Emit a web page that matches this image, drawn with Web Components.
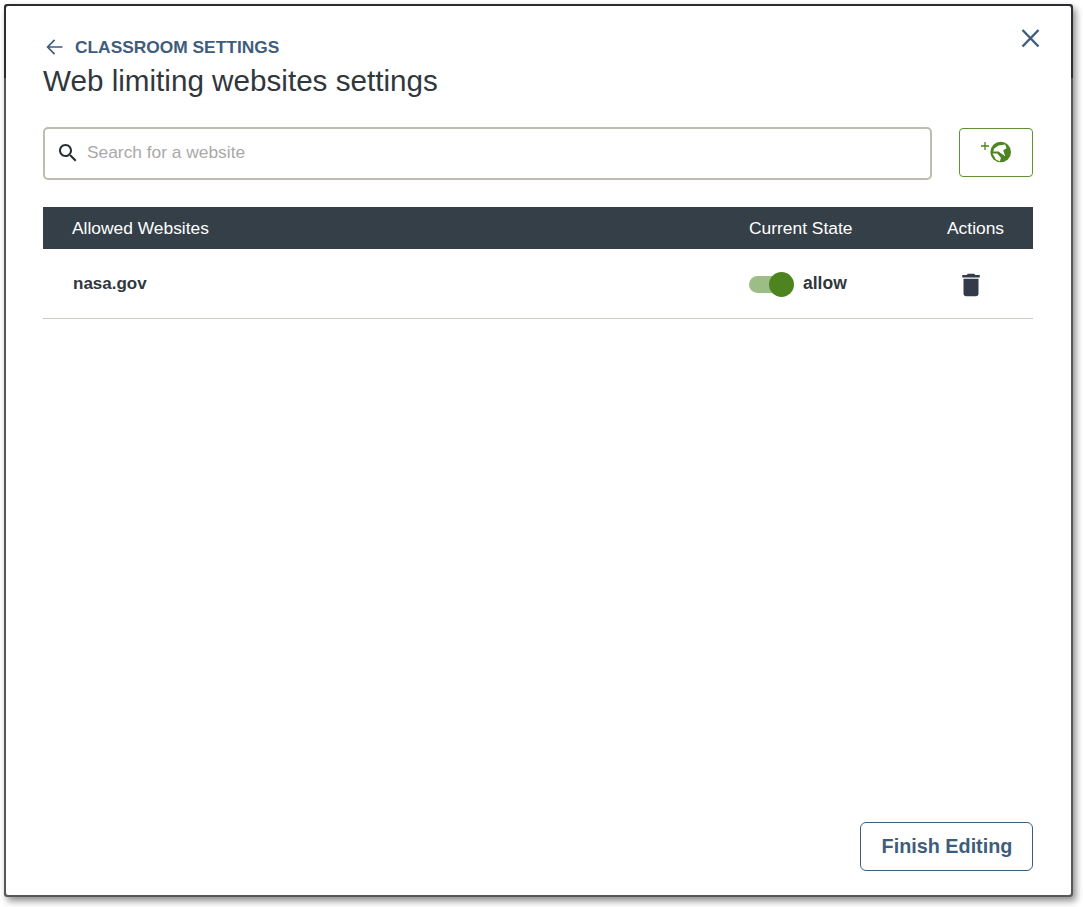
<!DOCTYPE html>
<html lang="en">
<head>
<meta charset="utf-8">
<title>Web limiting websites settings</title>
<style>
    html, body { margin: 0; height: 100%; background: #fff; }
    body { font-family: "Liberation Sans", Arial, sans-serif; }
</style>
</head>
<body>
<settings-modal>
    <modal-header slot="header" crumb="Classroom Settings" heading="Web limiting websites settings"></modal-header>
    <search-row placeholder="Search for a website"></search-row>
    <site-table>
        <site-row name="nasa.gov" state="allow"></site-row>
    </site-table>
    <finish-button slot="footer">Finish Editing</finish-button>
</settings-modal>

<script>
class SettingsModal extends HTMLElement {
    constructor() {
        super();
        this._shadowRoot = this.attachShadow({mode: 'open'});
    }

    connectedCallback() {
        this._shadowRoot.innerHTML = `
        <style>
            :host {
                display: block;
                box-sizing: border-box;
                width: 1069px;
                height: 893px;
                margin: 4px 0 0 4px;
                padding: 2px;
                border-radius: 3px;
                background: linear-gradient(#2b2d30 0 74px, #55585a 74px);
                box-shadow: 3px 4px 7px rgba(0, 0, 0, .45);
            }

            .panel {
                box-sizing: border-box;
                height: 100%;
                display: flex;
                flex-direction: column;
                padding: 28px 38px 24px 37px;
                border-radius: 2px;
                background: #fff;
            }

            .content { flex: 1; }

            footer {
                display: flex;
                justify-content: flex-end;
            }
        </style>
        <div class="panel">
            <slot name="header"></slot>
            <div class="content"><slot></slot></div>
            <footer><slot name="footer"></slot></footer>
        </div>
        `;
    }
}

class ModalHeader extends HTMLElement {
    constructor() {
        super();
        this._shadowRoot = this.attachShadow({mode: 'open'});
    }

    connectedCallback() {
        this._shadowRoot.innerHTML = `
        <style>
            :host {
                display: block;
                position: relative;
            }

            .crumb {
                display: flex;
                align-items: center;
                gap: 10px;
                height: 26px;
                padding-left: 2px;
                color: #3e5d7c;
                font-size: 17.350px;
                font-weight: 700;
                text-transform: uppercase;
            }

            .crumb svg { display: block; }

            h1 {
                margin: 3px 0 0;
                color: #30373d;
                font-size: 29.650px;
                font-weight: 400;
                line-height: 36px;
            }

            .close {
                position: absolute;
                top: -9px;
                right: -10px;
                display: block;
            }
        </style>
        <div class="crumb">
            <svg width="20" height="20" viewBox="0 0 20 20" fill="none" stroke="#3e5d7c" stroke-width="1.7">
                <path d="M17.5 10H3M9.6 2.8 2.6 10l7 7.2"/>
            </svg>
            <span>${this.getAttribute('crumb')}</span>
        </div>
        <h1>${this.getAttribute('heading')}</h1>
        <svg class="close" width="26" height="26" viewBox="0 0 26 26" fill="none" stroke="#3e5d7c" stroke-width="2.4">
            <path d="M5.500 5l16 16.500M21.500 5l-16 16.500"/>
        </svg>
        `;
    }
}

class SearchRow extends HTMLElement {
    constructor() {
        super();
        this._shadowRoot = this.attachShadow({mode: 'open'});
    }

    connectedCallback() {
        this._shadowRoot.innerHTML = `
        <style>
            :host {
                display: flex;
                align-items: flex-start;
                gap: 27px;
                margin-top: 28px;
            }

            .box {
                box-sizing: border-box;
                flex: 1;
                height: 53px;
                display: flex;
                align-items: center;
                gap: 7px;
                padding: 0 12px 2px 11px;
                border: 2px solid #bfbcae;
                border-radius: 5px;
            }

            .box svg { flex: none; display: block; }

            input {
                flex: 1;
                min-width: 0;
                padding: 0;
                border: 0;
                outline: 0;
                background: none;
                font: 17.350px "Liberation Sans", Arial, sans-serif;
                color: #30373d;
            }

            input::placeholder {
                color: #a9a9a9;
                opacity: 1;
            }

            button {
                box-sizing: border-box;
                flex: none;
                width: 74px;
                height: 49px;
                margin-top: 1px;
                padding: 0;
                display: flex;
                align-items: center;
                justify-content: center;
                border: 1.500px solid #5f9137;
                border-radius: 4px;
                background: #fff;
            }

            button svg { display: block; }
        </style>
        <div class="box">
            <svg width="24" height="24" viewBox="0 0 24 24" fill="#262d33">
                <path d="M15.500 14h-.79l-.28-.27C15.410 12.590 16 11.110 16 9.500 16 5.910 13.090 3 9.500 3S3 5.910 3 9.500 5.910 16 9.500 16c1.610 0 3.090-.59 4.230-1.570l.27.28v.79l5 4.990L20.490 19l-4.990-5zm-6 0C7.010 14 5 11.990 5 9.500S7.010 5 9.500 5 14 7.010 14 9.500 11.990 14 9.500 14z"/>
            </svg>
            <input type="search" placeholder="${this.getAttribute('placeholder')}">
        </div>
        <button type="button" aria-label="Add website">
            <svg width="32" height="24" viewBox="0 0 32 24">
                <path d="M1 5h8M5 1v8" stroke="#4d841f" stroke-width="1.300" fill="none"/>
                <circle cx="20.700" cy="11" r="10.300" fill="#4d841f"/>
                <path fill="#fff" d="M14.200 7.500 18.500 4.500 25.200 3.500 26.500 7.200 23.200 9.200 25.200 15.200 21.200 12.500 18.500 10.500 13.200 10.500zM12.500 12.500 17.200 12.500 20.900 16.800 19.900 20.500 15.900 18.500z"/>
            </svg>
        </button>
        `;
    }
}

class SiteTable extends HTMLElement {
    constructor() {
        super();
        this._shadowRoot = this.attachShadow({mode: 'open'});
    }

    connectedCallback() {
        this._shadowRoot.innerHTML = `
        <style>
            :host {
                display: block;
                margin-top: 27px;
            }

            .head {
                height: 42px;
                display: grid;
                grid-template-columns: 706px 198px 86px;
                align-items: center;
                background: #343f48;
                color: #fff;
                font-size: 17.400px;
            }

            .head div:first-child { padding-left: 29px; }
        </style>
        <div class="head">
            <div>Allowed Websites</div>
            <div>Current State</div>
            <div>Actions</div>
        </div>
        <slot></slot>
        `;
    }
}

class SiteRow extends HTMLElement {
    constructor() {
        super();
        this._shadowRoot = this.attachShadow({mode: 'open'});
    }

    connectedCallback() {
        this._shadowRoot.innerHTML = `
        <style>
            :host {
                display: grid;
                grid-template-columns: 706px 198px 86px;
                align-items: center;
                height: 70px;
                box-sizing: border-box;
                padding-top: 2px;
                border-bottom: 1px solid #cfcac2;
                color: #30373d;
                font-size: 17.500px;
                font-weight: 700;
            }

            .name {
                padding: 0 0 1px 30px;
                font-size: 17px;
            }

            .state {
                display: flex;
                align-items: center;
                gap: 9px;
            }

            .state span { padding-bottom: 3px; }

            .delete {
                display: block;
                margin-left: 9px;
            }
        </style>
        <div class="name">${this.getAttribute('name')}</div>
        <div class="state">
            <toggle-switch></toggle-switch>
            <span>${this.getAttribute('state')}</span>
        </div>
        <svg class="delete" width="30" height="30" viewBox="0 0 24 24" fill="#333a4a">
            <path d="M6 19c0 1.100.9 2 2 2h8c1.100 0 2-.9 2-2V7H6v12zM19 4h-3.500l-1-1h-5l-1 1H5v2h14V4z"/>
        </svg>
        `;
    }
}

class ToggleSwitch extends HTMLElement {
    constructor() {
        super();
        this._shadowRoot = this.attachShadow({mode: 'open'});
    }

    connectedCallback() {
        this._shadowRoot.innerHTML = `
        <style>
            :host {
                display: block;
                position: relative;
                width: 45px;
                height: 26px;
            }

            .track {
                position: absolute;
                left: 0;
                top: 4px;
                width: 36px;
                height: 17px;
                border-radius: 9px;
                background: #9dbd87;
            }

            .knob {
                position: absolute;
                right: 0;
                top: 0;
                width: 25px;
                height: 25px;
                border-radius: 50%;
                background: #4d841f;
            }
        </style>
        <div class="track"></div>
        <div class="knob"></div>
        `;
    }
}

class FinishButton extends HTMLElement {
    constructor() {
        super();
        this._shadowRoot = this.attachShadow({mode: 'open'});
    }

    connectedCallback() {
        this._shadowRoot.innerHTML = `
        <style>
            :host { display: block; }

            button {
                box-sizing: border-box;
                display: block;
                width: 173px;
                height: 49px;
                padding: 0 0 0 1px;
                border: 1px solid #3e5d7c;
                border-radius: 6px;
                background: #fff;
                color: #3e5d7c;
                font: 700 19.800px "Liberation Sans", Arial, sans-serif;
            }
        </style>
        <button type="button"><slot></slot></button>
        `;
    }
}

customElements.define('settings-modal', SettingsModal);
customElements.define('modal-header', ModalHeader);
customElements.define('search-row', SearchRow);
customElements.define('site-table', SiteTable);
customElements.define('site-row', SiteRow);
customElements.define('toggle-switch', ToggleSwitch);
customElements.define('finish-button', FinishButton);
</script>
</body>
</html>
